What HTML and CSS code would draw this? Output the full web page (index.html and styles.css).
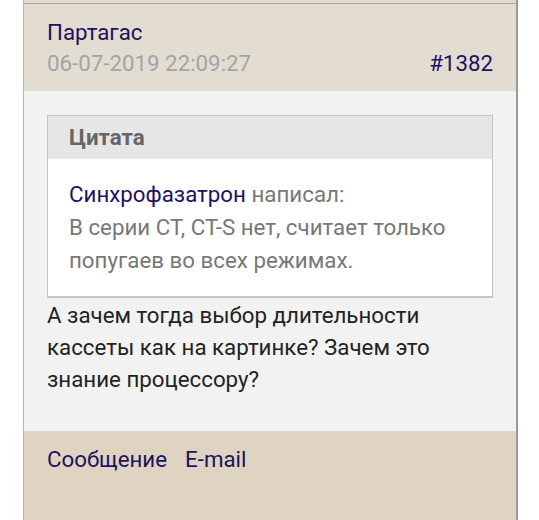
FILE: index.html
```html
<!DOCTYPE html>
<html lang="ru">
<head>
<meta charset="utf-8">
<link rel="stylesheet" href="styles.css">
</head>
<body>
<div class="thread">
  <div class="prev"></div>
  <div class="post">
    <div class="post-head">
      <a class="author" href="#">Партагас</a>
      <div class="meta">
        <span class="date">06-07-2019 22:09:27</span>
        <a class="num" href="#">#1382</a>
      </div>
    </div>
    <div class="post-body">
      <div class="quote">
        <div class="quote-title">Цитата</div>
        <div class="quote-text"><a class="link" href="#">Синхрофазатрон</a> написал:<br>В серии CT, CT-S нет, считает только попугаев во всех режимах.</div>
      </div>
      <div class="message">А зачем тогда выбор длительности кассеты как на картинке? Зачем это знание процессору?</div>
    </div>
    <div class="post-foot">
      <a class="link" href="#">Сообщение</a>
      <a class="link" href="#">E-mail</a>
    </div>
  </div>
</div>
</body>
</html>
```
FILE: styles.css
```css
* { box-sizing: border-box; }
html, body { margin: 0; padding: 0; background: #fff; }
body {
  font-family: Roboto, "Noto Sans", sans-serif;
  font-size: 22.3px;
  width: 539px;
  height: 520px;
  overflow: hidden;
}
a { text-decoration: none; }
.thread {
  margin-left: 23px;
  width: 495px;
  border-left: 1px solid #b4b4b4;
  border-right: 2px solid #9a9a9a;
}
.prev {
  height: 4px;
  background: #e3ddd0;
  border-bottom: 1px solid #a8a8a8;
}
.post-head {
  background: #e3ddd1;
  padding: 15px 23px 0 23px;
  height: 87px;
}
.author { color: #1c1260; display: block; line-height: 26px; }
.meta {
  display: flex;
  justify-content: space-between;
  line-height: 36px;
}
.date { color: #a4a4a4; }
.num { color: #1c1260; }
.post-body {
  background: #f2f2f2;
  padding: 24px 23px 0 23px;
  height: 340px;
}
.quote {
  border: 1px solid #c4c4c4;
  border-bottom-width: 2px;
  background: #fff;
}
.quote-title {
  background: #e6e6e6;
  color: #666;
  font-weight: bold;
  padding: 0 21px;
  height: 43px;
  line-height: 43px;
}
.quote-text {
  color: #777;
  padding: 19px 21px 19px 21px;
  line-height: 33px;
}
.link { color: #1c1260; }
.message {
  color: #222;
  line-height: 32px;
  padding-top: 1px;
}
.post-foot {
  background: #dfd4c2;
  height: 100px;
  padding: 12px 23px;
  line-height: 32px;
  display: flex;
  gap: 18px;
}
```
